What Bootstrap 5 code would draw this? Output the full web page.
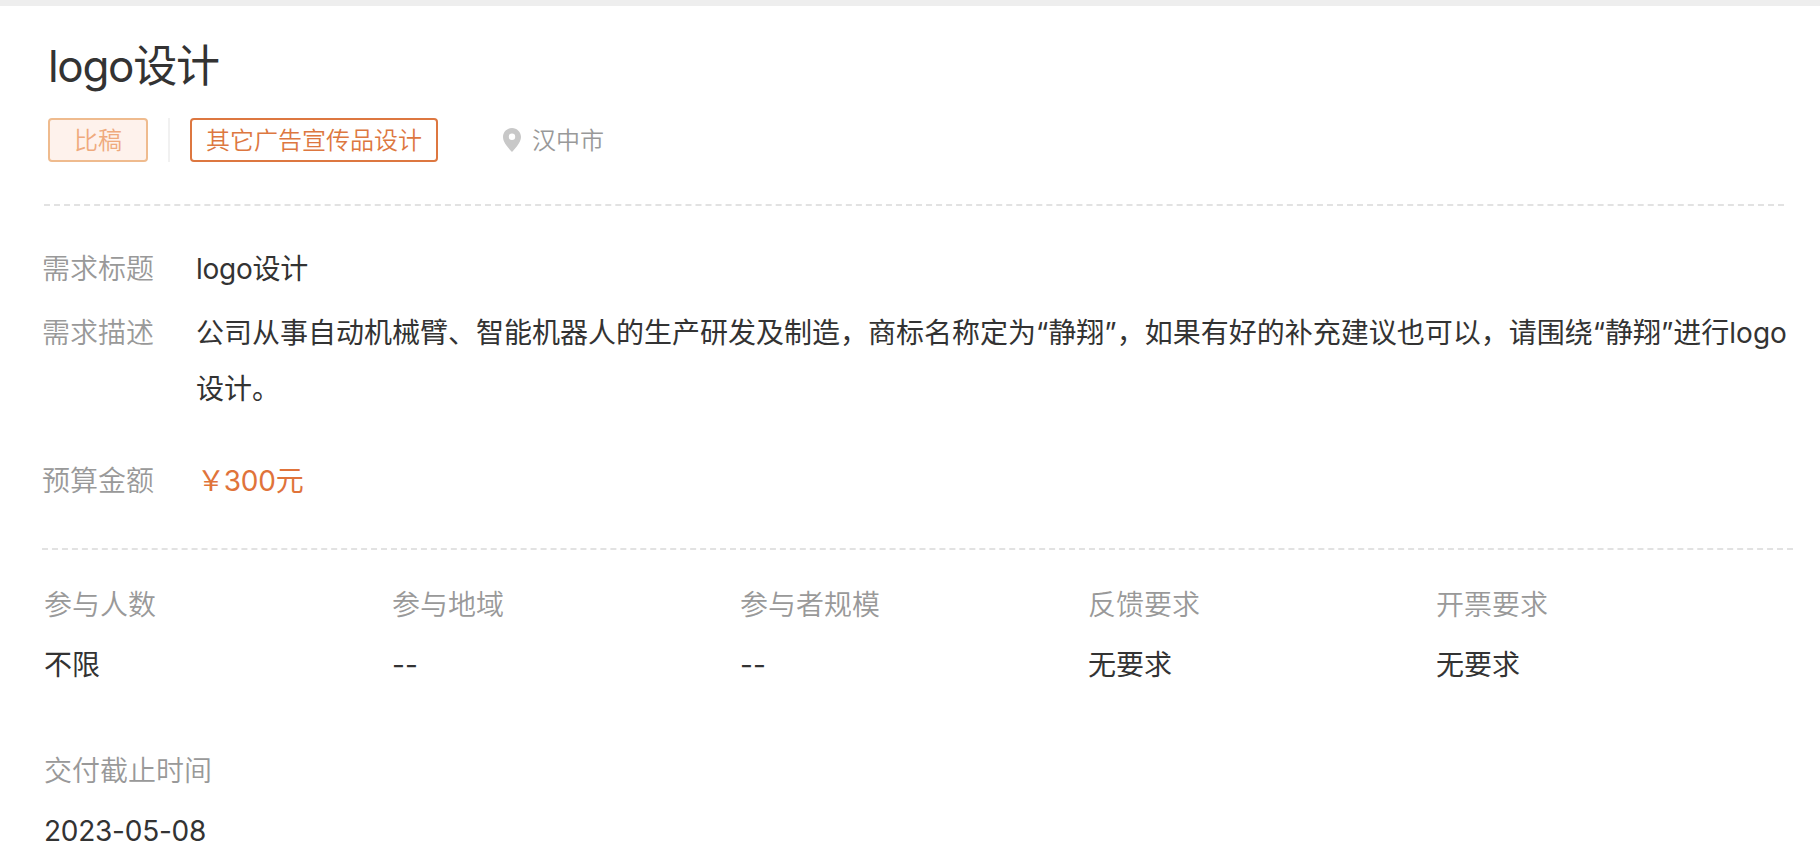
<!DOCTYPE html>
<html lang="zh-CN">
<head>
    <meta charset="UTF-8">
    <meta name="viewport" content="width=device-width, initial-scale=1.0">
    <title>logo设计</title>
    <link href="https://cdn.jsdelivr.net/npm/bootstrap@5.3.0/dist/css/bootstrap.min.css" rel="stylesheet">
    <style>
        body {
            font-family: Inter, "Noto Sans CJK SC", sans-serif;
            font-size: 28px;
            line-height: 56px;
            font-weight: 400;
            color: #333;
            background: #fff;
        }

        .top-strip {
            height: 6px;
            background: #eee;
        }

        .demand {
            padding: 28px 27px 0 42px;
        }

        .demand-title {
            font-size: 44px;
            line-height: 64px;
            font-weight: 400;
            padding-left: 6px;
            letter-spacing: -1.3px;
        }

        .tag-row {
            height: 44px;
            margin-top: 20px;
            padding-left: 6px;
            font-size: 24px;
            font-weight: 350;
            line-height: 42px;
        }

        .tag {
            height: 44px;
            border: 2px solid #dd7740;
            border-radius: 4px;
            color: #dd7740;
            text-align: center;
        }

        .tag-type {
            width: 100px;
            border-color: #efbb8e;
            background: #fef2ec;
            color: #efaa7d;
        }

        .tag-category {
            width: 248px;
        }

        .tag-divider {
            width: 2px;
            height: 44px;
            margin: 0 20px;
            background: #f1f1f1;
        }

        .city {
            margin-left: 65px;
            color: #999;
        }

        .city-name {
            padding-top: 2px;
            margin-left: 11px;
        }

        .dash-line {
            border-top: 2px dashed #e2e2e2;
        }

        .dash-top {
            margin: 42px 9px 35px 2px;
        }

        .dash-bottom {
            margin-top: 39px;
        }

        .field-name {
            width: 154px;
            color: #999;
            font-weight: 350;
        }

        .field-price {
            margin-top: 36px;
        }

        .price {
            color: #e0733a;
        }

        .price-sign {
            margin: 0 -1px 0 1px;
        }

        .tight {
            letter-spacing: -0.25px;
        }

        .facts {
            display: grid;
            grid-template-columns: repeat(5, 348px);
            row-gap: 46px;
            padding: 25px 0 0 2px;
        }

        .fact dt {
            color: #999;
            font-weight: 350;
            line-height: 60px;
        }

        .fact dd {
            margin: 0;
            line-height: 60px;
        }
    </style>
</head>
<body>
    <div class="top-strip"></div>

    <main class="demand">
        <h1 class="demand-title mb-0">logo设计</h1>

        <div class="tag-row d-flex align-items-center">
            <span class="tag tag-type">比稿</span>
            <span class="tag-divider"></span>
            <span class="tag tag-category">其它广告宣传品设计</span>
            <span class="city d-flex align-items-center">
                <svg width="18" height="24" viewBox="0 0 18 24">
                    <path fill="#c8c8c8" fill-rule="evenodd" d="M9 0C4 0 0 4 0 9c0 5.500 5.500 11 9 15 3.500-4 9-9.500 9-15 0-5-4-9-9-9zm0 5.500a3.200 3.200 0 1 1 0 6.400 3.200 3.200 0 0 1 0-6.400z"/>
                </svg>
                <span class="city-name">汉中市</span>
            </span>
        </div>

        <div class="dash-line dash-top"></div>

        <div class="d-flex">
            <div class="field-name flex-shrink-0">需求标题</div>
            <div class="tight">logo设计</div>
        </div>
        <div class="d-flex mt-2">
            <div class="field-name flex-shrink-0">需求描述</div>
            <div class="text-nowrap">公司从事自动机械臂、智能机器人的生产研发及制造，商标名称定为“静翔”，如果有好的补充建议也可以，请围绕“静翔”进行logo<br>设计。</div>
        </div>
        <div class="d-flex field-price">
            <div class="field-name flex-shrink-0">预算金额</div>
            <div class="price tight"><span class="price-sign">￥</span>300元</div>
        </div>

        <div class="dash-line dash-bottom"></div>

        <div class="facts">
            <dl class="fact mb-0"><dt>参与人数</dt><dd>不限</dd></dl>
            <dl class="fact mb-0"><dt>参与地域</dt><dd>--</dd></dl>
            <dl class="fact mb-0"><dt>参与者规模</dt><dd>--</dd></dl>
            <dl class="fact mb-0"><dt>反馈要求</dt><dd>无要求</dd></dl>
            <dl class="fact mb-0"><dt>开票要求</dt><dd>无要求</dd></dl>
            <dl class="fact mb-0"><dt>交付截止时间</dt><dd class="tight">2023-05-08</dd></dl>
        </div>
    </main>

    <script src="https://cdn.jsdelivr.net/npm/bootstrap@5.3.0/dist/js/bootstrap.bundle.min.js"></script>
</body>
</html>
